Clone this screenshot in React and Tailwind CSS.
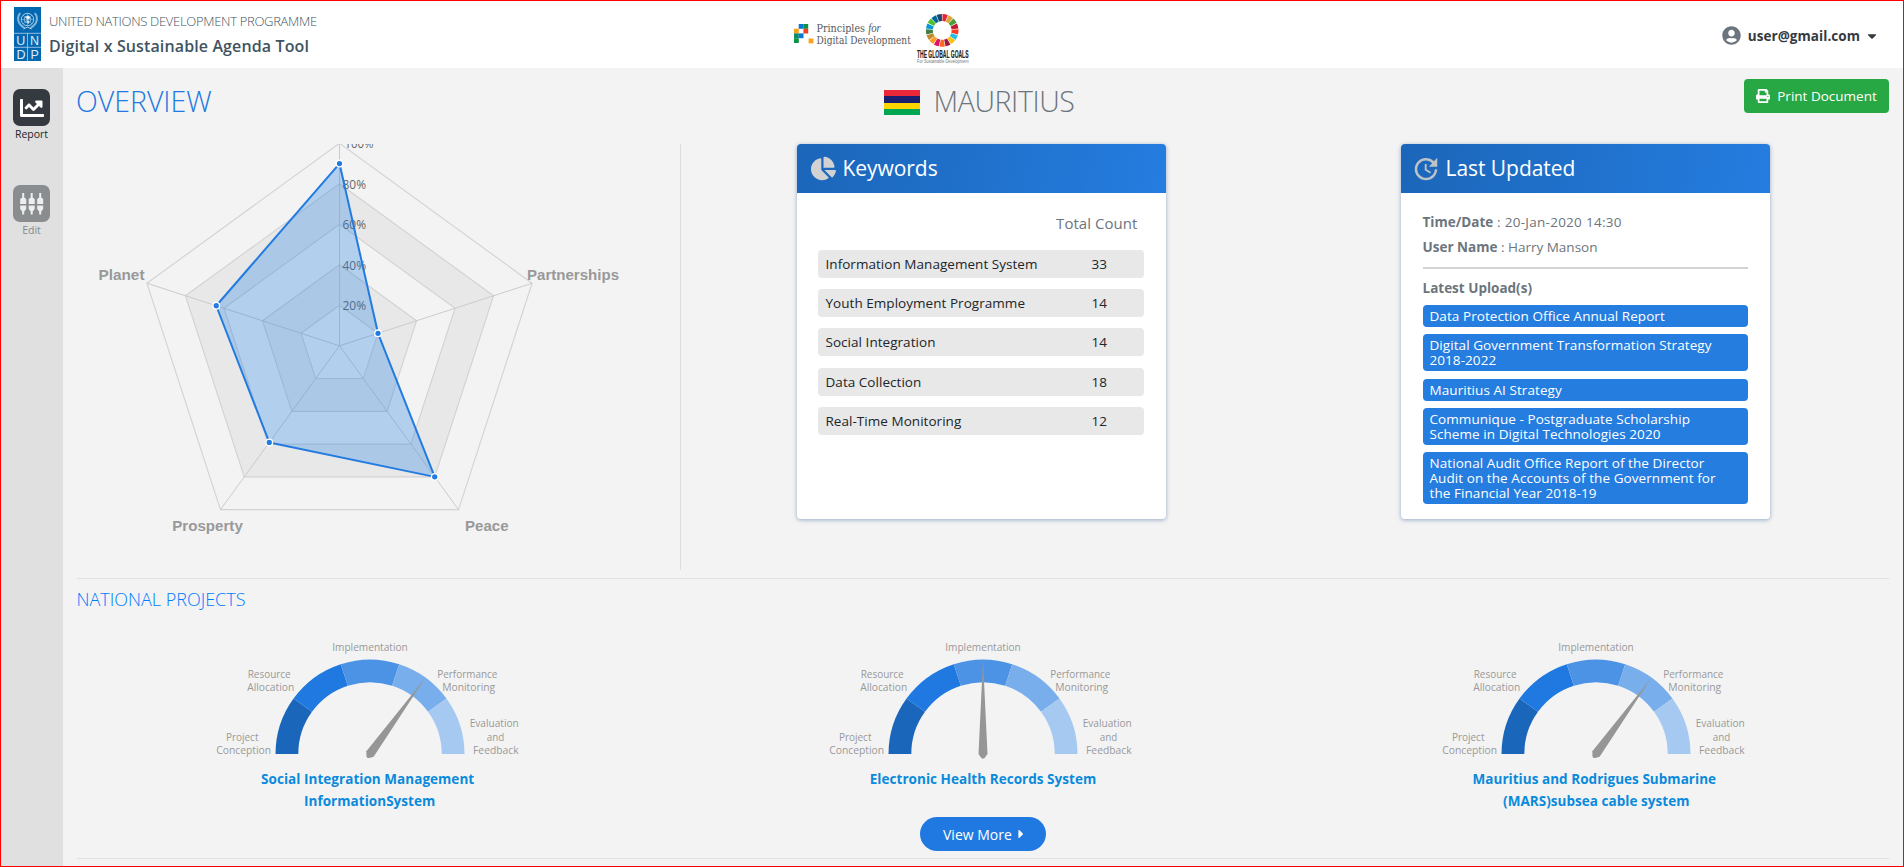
import { FaCaretDown, FaCaretRight, FaChartLine, FaChartPie, FaPrint, FaUserCircle } from 'react-icons/fa';
import { MdUpdate } from 'react-icons/md';

const polar = (cx, cy, r, deg) => {
  const a = (deg * Math.PI) / 180;
  return [cx + r * Math.cos(a), cy - r * Math.sin(a)];
};

function UndpLogo() {
  return (
    <svg width="27" height="54" viewBox="0 0 27 54" className="shrink-0">
      <rect width="27" height="54" fill="#0468b1" />
      <g fill="none" stroke="#c9e0f2">
        <circle cx="13.5" cy="12.5" r="6.2" strokeWidth="0.8" />
        <circle cx="13.5" cy="12.5" r="3.4" strokeWidth="0.6" />
        <path d="M7.3 12.500h12.400M13.500 6.300v12.400M9.100 8.100l8.800 8.800M17.900 8.100l-8.800 8.800" strokeWidth="0.4" />
        <path d="M6.200 6C2.600 10.500 3.500 17.500 10.500 20.800M20.800 6c3.600 4.500 2.700 11.500-4.300 14.800" strokeWidth="2" opacity="0.65" />
        <path d="M9.500 22l4-2 4 2" strokeWidth="0.9" />
      </g>
      <path d="M11 10l3.500-1.500 2 2.500-2.500 1.500zM12 13.500l3 .5-.5 3z" fill="#e8f2fa" />
      <path d="M0 26.300h27M0 40.300h27M13.500 26v28" stroke="#9cc5e5" strokeWidth="0.9" />
      <g fill="#dcecf8" textAnchor="middle" className="font-['Liberation_Sans',sans-serif] text-[12.500px]">
        <text x="6.800" y="37.900">U</text>
        <text x="20.600" y="37.900">N</text>
        <text x="6.900" y="51.900">D</text>
        <text x="20.600" y="51.900">P</text>
      </g>
    </svg>
  );
}

function PrinciplesLogo() {
  const cells = [
    [4.7, 0, '#0a78d1'], [9.4, 0, '#0b9444'], [0, 4.7, '#faa21b'], [9.4, 4.7, '#ee4223'],
    [0, 9.4, '#0b8a6c'], [4.7, 9.4, '#0a78d1'], [0, 14.2, '#0b9444'], [14.6, 14.5, '#faa21b'],
  ];
  return (
    <svg width="119" height="34" viewBox="0 -4 119 34" className="shrink-0 overflow-visible">
      {cells.map(([x, y, c], i) => (
        <rect key={i} x={x} y={y + 2} width="4.8" height="4.8" fill={c} />
      ))}
      <g fill="#55585b" className="font-['DejaVu_Serif',serif] text-[10.500px]">
        <text x="22.500" y="9.900" textLength="48.500" lengthAdjust="spacingAndGlyphs">Principles</text>
        <text x="74.300" y="9.900" textLength="12.500" lengthAdjust="spacingAndGlyphs" fontStyle="italic" className="font-['Liberation_Serif',serif] text-[12px]">for</text>
        <text x="22.500" y="22.300" textLength="94.300" lengthAdjust="spacingAndGlyphs">Digital Development</text>
      </g>
    </svg>
  );
}

const goalColors = [
  '#e5243b', '#dda63a', '#4c9f38', '#c5192d', '#ff3a21', '#26bde2', '#fcc30b', '#a21942', '#fd6925',
  '#dd1367', '#fd9d24', '#bf8b2e', '#3f7e44', '#0a97d9', '#56c02b', '#00689d', '#19486a',
];

function arcPath(cx, cy, ro, ri, from, to) {
  const [a, b] = polar(cx, cy, ro, from);
  const [c, d] = polar(cx, cy, ro, to);
  const [e, f] = polar(cx, cy, ri, to);
  const [g, h] = polar(cx, cy, ri, from);
  return `M${a} ${b}A${ro} ${ro} 0 0 1 ${c} ${d}L${e} ${f}A${ri} ${ri} 0 0 0 ${g} ${h}Z`;
}

function GlobalGoalsLogo() {
  const step = 360 / 17;
  return (
    <svg width="54" height="54" viewBox="0 0 54 54" className="shrink-0 overflow-visible">
      {goalColors.map((c, i) => (
        <path key={c} d={arcPath(25.2, 18.4, 16.3, 9.4, 90 - i * step - 1.2, 90 - (i + 1) * step + 1.2)} fill={c} />
      ))}
      <text x="0" y="45.900" textLength="51.500" lengthAdjust="spacingAndGlyphs" fill="#222" stroke="#222" strokeWidth="0.150" className="font-['Liberation_Sans_Narrow','Liberation_Sans',sans-serif] text-[10px] font-bold">
        THE GLOBAL GOALS
      </text>
      <text x="0" y="50.500" textLength="51.500" lengthAdjust="spacingAndGlyphs" fill="#777" className="font-['Liberation_Sans',sans-serif] text-[4.500px]">
        For Sustainable Development
      </text>
    </svg>
  );
}

function PlugsIcon() {
  return (
    <svg width="24" height="24" viewBox="0 0 24 24" fill="#eee">
      {[0, 8.5, 17].map((x) => (
        <path
          key={x}
          d={`M${x + 2.2} 1h2v4.500l2 1.500v5h-6v-5l2-1.500zM${x + 0.2} 13.500h6v3.500l-2 2.500v3h-2v-3l-2-2.500z`}
        />
      ))}
    </svg>
  );
}

function Header() {
  return (
    <header className="flex h-[67px] shrink-0 items-start bg-white">
      <div className="flex w-[793px] gap-[8px] pl-[13px] pt-[6px] text-[#3f545f]">
        <UndpLogo />
        <div className="pt-[4px]">
          <div className="text-[13px] font-[350] leading-5 tracking-[-0.3px]">UNITED NATIONS DEVELOPMENT PROGRAMME</div>
          <div className="mt-[5px] text-[16px] font-[540] leading-5 tracking-[0.12px]">Digital x Sustainable Agenda Tool</div>
        </div>
      </div>
      <div className="flex flex-1 pt-[11px]">
        <div className="pt-[6px]"><PrinciplesLogo /></div>
        <div className="ml-[4px]"><GlobalGoalsLogo /></div>
      </div>
      <div className="flex h-[67px] items-center pr-[24px] pt-[2px]">
        <FaUserCircle className="mr-[7px] size-[19px] text-[#6c757d]" />
        <span className="text-[13.5px] font-bold leading-5 tracking-[0.05px] text-[#343a40]">user@gmail.com</span>
        <FaCaretDown className="ml-[5px] size-[14px] text-[#343a40]" />
      </div>
    </header>
  );
}

function Sidebar() {
  return (
    <nav className="flex w-[62px] shrink-0 flex-col items-center bg-[#e0e0e0] pr-[1px] pt-[21px] text-[10.5px] leading-4">
      <a className="flex flex-col items-center text-[#212529]">
        <span className="flex size-[37px] items-center justify-center rounded-[7px] bg-[#343a40] text-white">
          <FaChartLine className="size-[24px]" />
        </span>
        <span>Report</span>
      </a>
      <a className="mt-[43px] flex flex-col items-center text-[#84878a]">
        <span className="flex size-[37px] items-center justify-center rounded-[7px] bg-[#8a8d90]">
          <PlugsIcon />
        </span>
        <span>Edit</span>
      </a>
    </nav>
  );
}

function MauritiusFlag() {
  return (
    <div className="mt-[6px] flex h-[25px] w-9 flex-col">
      <div className="flex-1 bg-[#ea2839]" />
      <div className="flex-1 bg-[#1a206d]" />
      <div className="flex-1 bg-[#ffd500]" />
      <div className="flex-1 bg-[#00a551]" />
    </div>
  );
}

const axes = [
  { value: 90 },
  { name: 'Partnerships', value: 20, x: 450, y: 136, w: 92 },
  { name: 'Peace', value: 80, x: 388, y: 387, w: 43.5 },
  { name: 'Prosperty', value: 59, x: 95.3, y: 387, w: 70.5 },
  { name: 'Planet', value: 64, x: 21.5, y: 136, w: 46 },
];

function RadarChart() {
  const cx = 262.5;
  const cy = 201.8;
  const R = 202.5;
  const at = (i, pct) => polar(cx, cy, (R * pct) / 100, 90 - i * 72);
  const ring = (pct) => axes.map((_, i) => at(i, pct).join(',')).join(' ');
  const shape = axes.map((a, i) => at(i, a.value));
  return (
    <svg width="600" height="426" viewBox="0 0 600 426" className="block overflow-hidden">
      {[100, 80, 60, 40, 20].map((p) => (
        <polygon key={p} points={ring(p)} fill={p % 40 === 0 ? '#e8e8e8' : '#f3f3f3'} stroke="#d2d2d2" strokeWidth="1.1" />
      ))}
      {axes.map((_, i) => {
        const [x, y] = at(i, 100);
        return <line key={i} x1={cx} y1={cy} x2={x} y2={y} stroke="#cacaca" />;
      })}
      <g fill="#666" className="text-[12px]">
        {[20, 40, 60, 80].map((p) => (
          <text key={p} x="265.500" y={cy - (R * p) / 100 + 4.8} textLength="23.500" lengthAdjust="spacingAndGlyphs">{p}%</text>
        ))}
        <text x="267.500" y="4" textLength="29" lengthAdjust="spacingAndGlyphs">100%</text>
      </g>
      <polygon points={shape.map((p) => p.join(',')).join(' ')} fill="#1f7fe6" fillOpacity="0.3" stroke="#237be0" strokeWidth="2" strokeLinejoin="round" />
      {shape.map(([x, y], i) => (
        <circle key={i} cx={x} cy={y} r="3.300" fill="#237be0" stroke="#fff" strokeWidth="1.300" />
      ))}
      <g fill="#999" className="font-['Liberation_Sans',sans-serif] text-[15px] font-bold">
        {axes.filter((a) => a.name).map((a) => (
          <text key={a.name} x={a.x} y={a.y} textLength={a.w} lengthAdjust="spacingAndGlyphs">{a.name}</text>
        ))}
      </g>
    </svg>
  );
}

function Card({ icon, title, children }) {
  return (
    <section className="flex h-[375px] w-[369px] flex-col overflow-hidden rounded-[4px] bg-white shadow-[0_1px_4px_rgba(70,110,160,0.55)]">
      <h2 className="flex h-[49px] shrink-0 items-center bg-linear-100 from-[#1b66b9] to-[#257de0] text-[21px] leading-7 text-white">
        {icon}
        <span className="pb-[2px] tracking-[-0.05px]">{title}</span>
      </h2>
      {children}
    </section>
  );
}

const keywords = [
  ['Information Management System', 33],
  ['Youth Employment Programme', 14],
  ['Social Integration', 14],
  ['Data Collection', 18],
  ['Real-Time Monitoring', 12],
];

function KeywordsCard() {
  return (
    <Card title="Keywords" icon={<FaChartPie className="ml-[14px] mr-[7px] size-[25px] text-[#d2d2d2]" />}>
      <div className="pr-[28px] pt-[18px] text-right text-[15px] leading-6 tracking-[0.05px] text-[#6c757d]">Total Count</div>
      <ul className="mt-[15px] flex flex-col gap-[11.2px] pl-[21px] pr-[22px]">
        {keywords.map(([name, count]) => (
          <li key={name} className="flex h-[28px] justify-between rounded-[4px] bg-[#e8e8e8] pl-[8px] text-[13.5px] leading-[29px] text-[#212529]">
            <span className="tracking-[0.04px]">{name}</span>
            <span className="w-[52px]">{count}</span>
          </li>
        ))}
      </ul>
    </Card>
  );
}

const uploads = [
  ['Data Protection Office Annual Report'],
  ['Digital Government Transformation Strategy', '2018-2022'],
  ['Mauritius AI Strategy'],
  ['Communique - Postgraduate Scholarship', 'Scheme in Digital Technologies 2020'],
  ['National Audit Office Report of the Director', 'Audit on the Accounts of the Government for', 'the Financial Year 2018-19'],
];

function LastUpdatedCard() {
  return (
    <Card title="Last Updated" icon={<MdUpdate className="ml-[10px] mr-[5px] size-[30px] text-[#bfc3c8]" />}>
      <div className="px-[22px] pt-[17px] text-[13.5px] text-[#6c757d]">
        <div className="leading-[25px]"><b>Time/Date</b><span className="tracking-[0.28px]"> : 20-Jan-2020 14:30</span></div>
        <div className="leading-[25px]"><b>User Name</b> : Harry Manson</div>
        <div className="mt-[7px] h-[2px] bg-[#d3d3d3]" />
        <div className="mt-[9px] font-bold leading-5">Latest Upload(s)</div>
        <ul className="mt-[7px] flex flex-col gap-[7.300px] font-medium tracking-[0.07px] text-white">
          {uploads.map((lines) => (
            <li key={lines[0]} className="rounded-[4px] bg-[#257de0] pb-[3px] pl-[7px] pt-[4px] leading-[15px]">
              {lines.map((l) => <div key={l} className="whitespace-nowrap">{l}</div>)}
            </li>
          ))}
        </ul>
      </div>
    </Card>
  );
}

const gaugeColors = ['#1a66ba', '#1f79e0', '#4c93e6', '#79aeed', '#a6c9f2'];
const gaugeLabels = [
  ['Project', -127.8, -13, 32.5], ['Conception', -126.3, 0, 55], ['Resource', -100.8, -76, 43], ['Allocation', -99.3, -63, 47],
  ['Implementation', 0, -103, 75.5], ['Performance', 97.3, -76, 60], ['Monitoring', 98.7, -63, 53],
  ['Evaluation', 124.2, -27, 49], ['and', 125.5, -13, 17.5], ['Feedback', 125.8, 0, 45.5],
];

function Gauge({ title, needle }) {
  const cx = 160;
  const cy = 124;
  return (
    <div className="flex flex-col items-center">
      <svg width="320" height="138" viewBox="0 0 320 138" className="block">
        {gaugeColors.map((c, i) => (
          <path key={c} d={arcPath(cx, cy, 94.5, 71.7, 180 - i * 36, 144 - i * 36)} fill={c} />
        ))}
        <path
          d={`M${cx} ${cy - 94}L${cx + 4.5} ${cy}L${cx + 1.8} ${cy + 3.7}Q${cx} ${cy + 5.5} ${cx - 1.8} ${cy + 3.7}L${cx - 4.5} ${cy}Z`}
          fill="#969696"
          transform={`rotate(${needle} ${cx} ${cy})`}
        />
        <g fill="#999" textAnchor="middle" className="text-[11.500px]">
          {gaugeLabels.map(([t, dx, dy, w]) => (
            <text key={t} x={cx + dx} y={cy + dy} textLength={w} lengthAdjust="spacingAndGlyphs">{t}</text>
          ))}
        </g>
      </svg>
      <div className="flex h-[44px] flex-col items-center text-[13.5px] font-bold leading-[22px] tracking-[0.04px] text-[#0a8adc]">
        {title.map((line, i) => (
          <span key={line} className={title.length > 1 && i === 0 ? 'pr-[4px]' : ''}>{line}</span>
        ))}
      </div>
    </div>
  );
}

const projects = [
  { title: ['Social Integration Management', 'InformationSystem'], needle: 36 },
  { title: ['Electronic Health Records System'], needle: 0 },
  { title: ['Mauritius and Rodrigues Submarine', '(MARS)subsea cable system'], needle: 36 },
];

export default function App() {
  return (
    <div className="flex h-[867px] w-[1904px] flex-col overflow-hidden border border-[#ff0000] bg-[#f3f3f3] font-['Open_Sans','Noto_Sans',sans-serif]">
      <Header />
      <div className="flex flex-1">
        <Sidebar />
        <main className="flex-1">
          <div className="grid h-[76px] grid-cols-3 px-[14px]">
            <h1 className="ml-[-1px] pt-[16px] text-[28.5px] font-light leading-[34px] text-[#1f79e0]">OVERVIEW</h1>
            <div className="mr-[8px] flex justify-center gap-[14px] pt-[16px]">
              <MauritiusFlag />
              <span className="text-[28.5px] font-light leading-[34px] tracking-[-0.4px] text-[#6c757d]">MAURITIUS</span>
            </div>
            <div className="flex items-start justify-end pt-[11px]">
              <button className="flex h-[34px] w-[145px] items-center justify-center gap-[7px] rounded-[4px] bg-[#28a745] text-[13.5px] text-white">
                <FaPrint className="size-[14px]" />
                Print Document
              </button>
            </div>
          </div>

          <div className="grid h-[434px] grid-cols-3 px-[14px]">
            <div className="h-[426px] border-r border-[#dcdee2]"><RadarChart /></div>
            <div className="flex justify-center pr-[4px]"><KeywordsCard /></div>
            <div className="flex justify-center pr-[4px]"><LastUpdatedCard /></div>
          </div>

          <div className="mx-[14px] border-t border-[#dee0e6] pt-[8px]">
            <h2 className="ml-[-0.5px] text-[18px] font-light leading-6 text-[#007bff]">NATIONAL PROJECTS</h2>
          </div>
          <div className="mt-[19px] grid grid-cols-3">
            {projects.map((p) => <Gauge key={p.title[0]} {...p} />)}
          </div>
          <div className="mx-[14px] flex justify-center border-b border-[#dee0e6] pb-[7px] pt-[5px]">
            <button className="flex h-[34px] w-[126px] items-center rounded-full bg-[#1f79e0] pl-[23px] text-[14px] text-white">
              View More
              <FaCaretRight className="ml-[2px] size-[14px]" />
            </button>
          </div>
        </main>
      </div>
    </div>
  );
}
